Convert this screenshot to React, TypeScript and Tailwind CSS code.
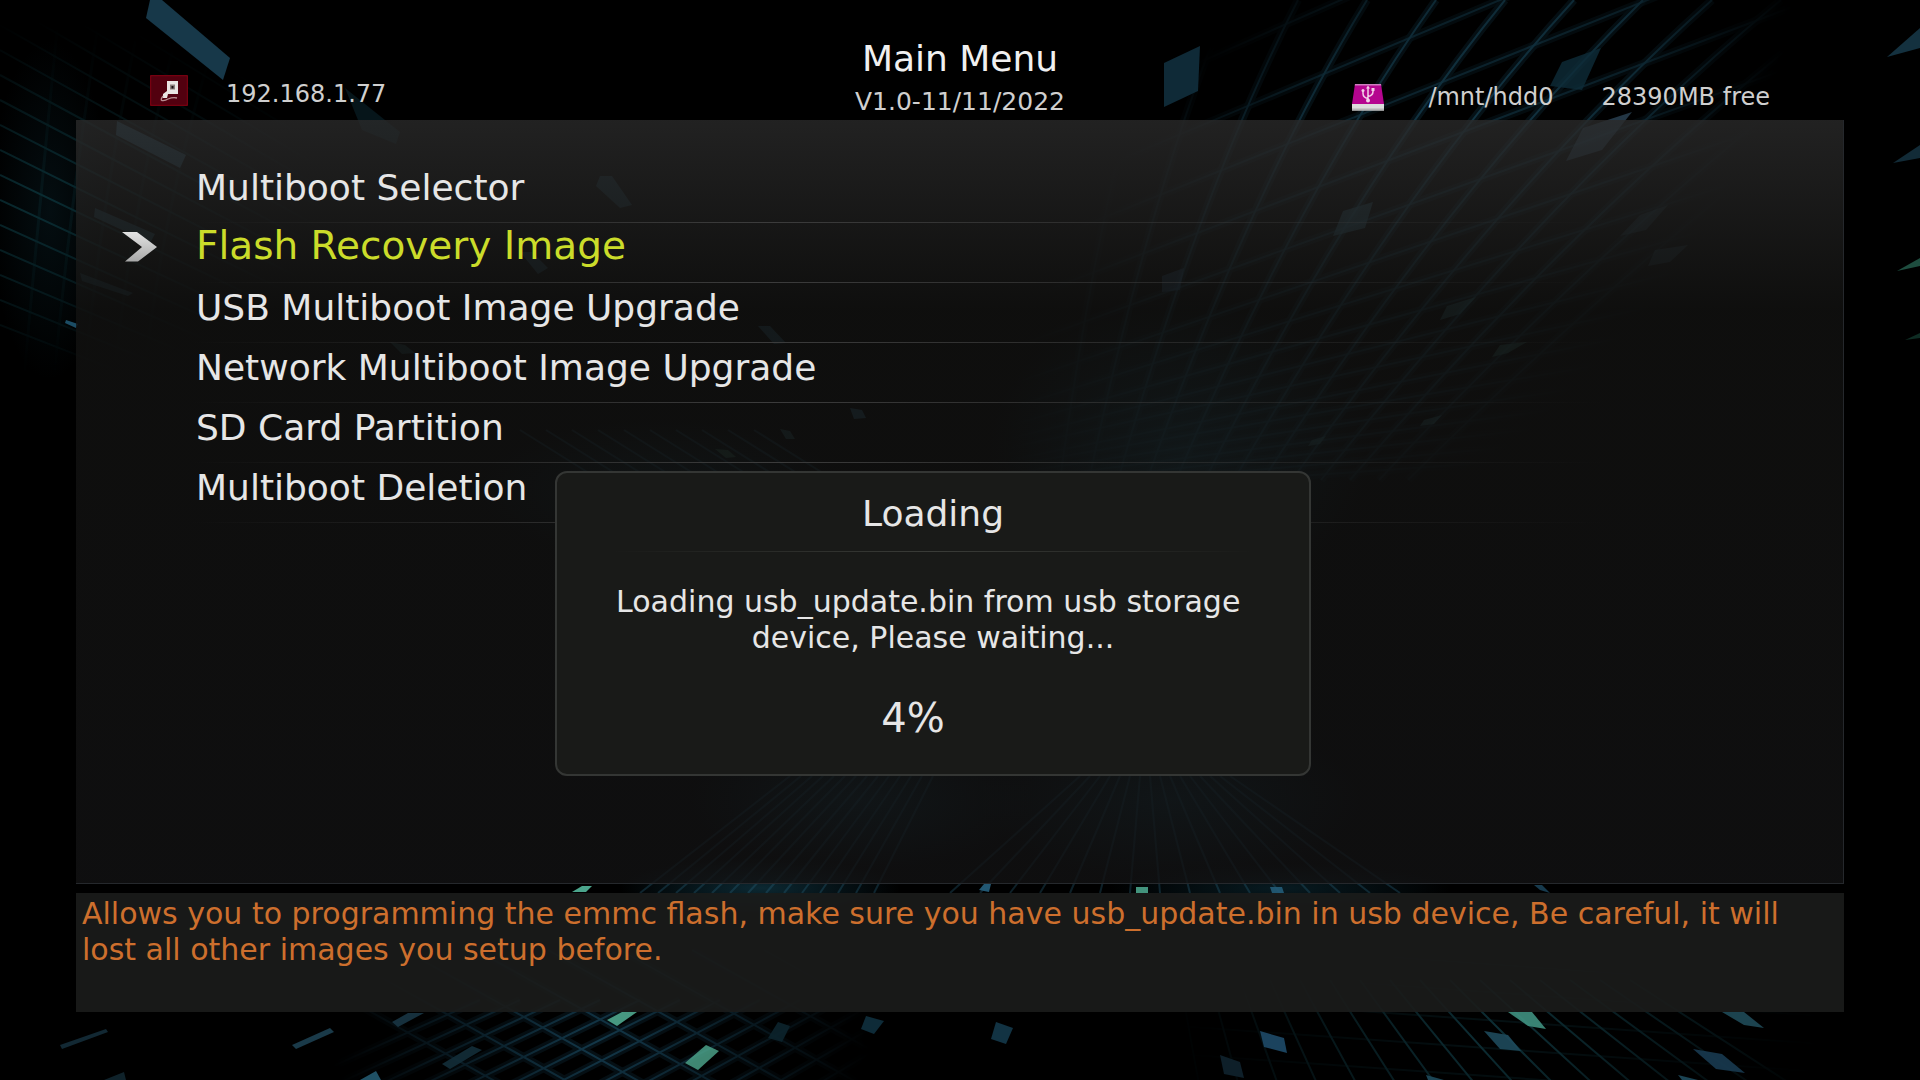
import React from "react";

const MENU = [
  "Multiboot Selector",
  "Flash Recovery Image",
  "USB Multiboot Image Upgrade",
  "Network Multiboot Image Upgrade",
  "SD Card Partition",
  "Multiboot Deletion",
];
const SELECTED = 1;

const range = (n: number) => Array.from({ length: n }, (_, i) => i);

/* Cross lines of the right wall: [height at x=1500, slope] */
const RIGHT_CROSS: [number, number][] = [
  [-70, -0.44], [0, -0.42], [59, -0.4], [118, -0.38], [172, -0.36], [218, -0.34], [256, -0.31],
  [288, -0.28], [316, -0.25], [340, -0.22], [362, -0.2], [382, -0.17], [400, -0.15], [417, -0.13],
  [433, -0.11], [448, -0.09], [462, -0.07],
];

/* Loose tiles: [points, colour, opacity] */
const TILES: [string, string, number][] = [
  ["150,0 162,0 230,58 223,80 146,18", "#1b4256", 0.85],
  ["117,121 186,155 180,168 116,135", "#2c5468", 0.75],
  ["95,208 155,234 150,243 94,217", "#234a5a", 0.7],
  ["80,273 133,293 128,296 82,281", "#234a5a", 0.5],
  ["66,320 78,324 76,328 65,323", "#1f5570", 0.9],
  ["345,88 400,132 396,144 362,130", "#07171d", 0.9],
  ["600,176 612,176 632,205 620,208 596,186", "#234a5c", 0.55],
  ["520,252 532,252 548,268 538,274", "#234a5c", 0.6],
  ["758,326 770,326 786,343 774,344", "#2b5a72", 0.6],
  ["850,408 862,410 866,418 854,419", "#2b5a72", 0.7],
  ["780,429 790,431 795,439 786,439", "#2b5a60", 0.6],
  ["715,449 728,450 736,457 726,458", "#30604e", 0.6],
  ["390,342 405,345 415,353 402,354", "#2b5a60", 0.5],
  ["1164,63 1200,46 1198,91 1164,107", "#123141", 0.85],
  ["1562,62 1601,48 1582,90 1550,86", "#0e2c38", 0.8],
  ["1583,128 1632,112 1602,150 1566,161", "#3a5a72", 0.6],
  ["1343,211 1373,202 1365,228 1333,236", "#2b5566", 0.7],
  ["1640,215 1668,205 1646,230 1620,236", "#2b4a5a", 0.4],
  ["1655,250 1688,245 1670,262 1648,266", "#2b4a5a", 0.4],
  ["1162,276 1184,268 1180,290 1162,292", "#2c5070", 0.5],
  ["1447,306 1476,297 1460,314 1440,320", "#2b5a60", 0.6],
  ["1500,345 1527,342 1508,353 1492,357", "#2b5a55", 0.6],
  ["1424,420 1442,415 1434,424 1420,426", "#2b5a60", 0.6],
  ["1312,440 1326,436 1320,444 1308,446", "#2b5a60", 0.6],
  ["1887,57 1920,28 1920,48", "#183a4a", 0.85],
  ["1893,163 1920,145 1920,158", "#183a4a", 0.75],
  ["1897,271 1920,258 1920,266", "#26604f", 0.8],
  ["1905,340 1920,333 1920,338", "#184a3a", 0.6],
  ["572,892 582,886 592,886 586,892", "#4fae93", 0.95],
  ["984,884 991,884 989,892 979,890", "#245c78", 0.95],
  ["1136,887 1148,887 1148,893 1136,893", "#4fae93", 0.85],
  ["1270,887 1282,887 1284,893 1272,893", "#245c78", 0.9],
  ["1534,885 1542,885 1550,893 1540,890", "#1d4860", 0.8],
  ["607,1020 622,1012 637,1012 617,1026", "#4fa98f", 0.9],
  ["706,1045 719,1051 698,1070 685,1063", "#4fa98f", 0.8],
  ["392,1022 408,1013 424,1013 398,1027", "#1c3c4c", 0.8],
  ["292,1045 330,1028 334,1032 296,1049", "#1f4456", 0.85],
  ["60,1045 106,1029 108,1032 62,1049", "#142c38", 0.9],
  ["442,1064 472,1046 482,1050 450,1069", "#132d38", 0.9],
  ["360,1080 376,1071 381,1080", "#245a70", 0.9],
  ["104,1080 124,1072 126,1080", "#11262f", 0.9],
  ["866,1016 884,1021 874,1034 861,1029", "#10303e", 0.9],
  ["778,1022 790,1026 782,1042 768,1038", "#0c242c", 0.9],
  ["996,1022 1013,1028 1006,1044 991,1039", "#14394a", 0.9],
  ["1260,1031 1284,1038 1287,1053 1264,1047", "#1e4a68", 0.9],
  ["1220,1055 1240,1062 1244,1078 1224,1074", "#10222e", 0.9],
  ["1484,1031 1508,1035 1521,1051 1500,1049", "#1e4a5c", 0.9],
  ["1508,1012 1532,1012 1546,1029 1528,1026", "#3f9080", 0.9],
  ["1693,1049 1722,1054 1745,1073 1716,1069", "#183a50", 0.9],
  ["1722,1012 1744,1012 1764,1028 1744,1025", "#1f4a58", 0.9],
  ["1426,1075 1444,1080 1428,1080", "#1e4a5c", 0.9],
  ["1678,1075 1698,1080 1682,1080", "#1e4a5c", 0.9],
];

function RightWall() {
  return (
    <>
      {range(13).map((i) => (
        <path key={i} d={`M${1160 + 69 * i} 0Q${1100 + 50 * i} 190 ${1060 + 29 * i} 480`} />
      ))}
      {RIGHT_CROSS.map(([y, s]) => (
        <path key={`c${y}`} d={`M1000 ${y - 500 * s}L1900 ${y + 400 * s}`} opacity="0.7" />
      ))}
    </>
  );
}

function LeftFloor() {
  return (
    <>
      {range(13).map((i) => (
        <path key={i} d={`M${280 + i * 44} 1090L${480 + i * 40} 1000`} />
      ))}
      {range(9).map((i) => (
        <path key={`c${i}`} d={`M${260 + i * 72} 950L${500 + i * 72} 1084`} />
      ))}
    </>
  );
}

function Backdrop() {
  return (
    <svg
      aria-hidden="true"
      className="absolute inset-0 h-full w-full"
      viewBox="0 0 1920 1080"
      preserveAspectRatio="none"
      fill="none"
    >
      <defs>
        <radialGradient id="fadeRight" gradientUnits="userSpaceOnUse" cx="0" cy="0" r="1" gradientTransform="translate(1400 210) rotate(-45) scale(500 250)">
          <stop offset="0" stopColor="#fff" />
          <stop offset="0.6" stopColor="#fff" stopOpacity="0.7" />
          <stop offset="1" stopColor="#fff" stopOpacity="0" />
        </radialGradient>
        <radialGradient id="fadeLeft" gradientUnits="userSpaceOnUse" cx="0" cy="0" r="1" gradientTransform="translate(30 200) scale(300 180)">
          <stop offset="0" stopColor="#fff" />
          <stop offset="1" stopColor="#fff" stopOpacity="0" />
        </radialGradient>
        <radialGradient id="fadeFloorL" gradientUnits="userSpaceOnUse" cx="0" cy="0" r="1" gradientTransform="translate(600 1040) scale(270 190)">
          <stop offset="0" stopColor="#fff" />
          <stop offset="1" stopColor="#fff" stopOpacity="0" />
        </radialGradient>
        <radialGradient id="fadeFloorR" gradientUnits="userSpaceOnUse" cx="0" cy="0" r="1" gradientTransform="translate(1500 1030) scale(330 200)">
          <stop offset="0" stopColor="#fff" />
          <stop offset="1" stopColor="#fff" stopOpacity="0" />
        </radialGradient>
        <radialGradient id="glow">
          <stop offset="0" stopColor="#1a5a70" stopOpacity="0.75" />
          <stop offset="1" stopColor="#1a5a70" stopOpacity="0" />
        </radialGradient>
        <mask id="maskRight"><rect width="1920" height="1080" fill="url(#fadeRight)" /></mask>
        <mask id="maskLeft"><rect width="1920" height="1080" fill="url(#fadeLeft)" /></mask>
        <mask id="maskFloorL"><rect width="1920" height="1080" fill="url(#fadeFloorL)" /></mask>
        <mask id="maskFloorR"><rect width="1920" height="1080" fill="url(#fadeFloorR)" /></mask>
      </defs>

      <ellipse cx="1180" cy="450" rx="190" ry="150" fill="url(#glow)" opacity="0.6" />
      <ellipse cx="660" cy="490" rx="180" ry="70" fill="url(#glow)" opacity="0.4" />
      <ellipse cx="860" cy="800" rx="170" ry="70" fill="url(#glow)" opacity="0.5" />
      <ellipse cx="1170" cy="800" rx="190" ry="80" fill="url(#glow)" opacity="0.5" />
      <ellipse cx="760" cy="888" rx="140" ry="30" fill="url(#glow)" opacity="0.6" />
      <ellipse cx="1280" cy="888" rx="170" ry="24" fill="url(#glow)" opacity="0.4" />
      <ellipse cx="50" cy="210" rx="60" ry="170" fill="url(#glow)" opacity="0.2" />

      <g mask="url(#maskRight)" stroke="#22617c">
        <g strokeWidth="8" opacity="0.2">
          <RightWall />
        </g>
        <g strokeWidth="2" opacity="0.5">
          <RightWall />
        </g>
      </g>

      <g mask="url(#maskLeft)" stroke="#12505a" strokeWidth="2" opacity="0.5">
        {range(20).map((i) => (
          <path key={i} d={`M0 ${-150 + i * 25}L400 ${120 + i * 19}`} />
        ))}
        {range(5).map((i) => (
          <path key={`v${i}`} d={`M${60 + i * 42} 0Q${40 + i * 30} 200 ${22 + i * 30} 400`} strokeWidth="3" opacity="0.35" />
        ))}
      </g>

      <g mask="url(#maskFloorL)" stroke="#1d526c">
        <g strokeWidth="8" opacity="0.22">
          <LeftFloor />
        </g>
        <g strokeWidth="2" opacity="0.6">
          <LeftFloor />
        </g>
      </g>

      <g mask="url(#maskFloorR)" stroke="#17505c" strokeWidth="2" opacity="0.6">
        {range(16).map((i) => (
          <path key={i} d={`M${1180 + i * 30} 980L${1200 + i * 40} 1090`} />
        ))}
        {range(7).map((i) => (
          <path key={`c${i}`} d={`M1150 ${940 + i * 28}L1850 ${990 + i * 28}`} opacity="0.35" />
        ))}
      </g>

      {/* distant floor and ceiling lines seen through the panel */}
      <g stroke="#2c6a86" strokeWidth="2" opacity="0.3">
        {range(16).map((i) => (
          <path key={i} d={`M${950 + i * 30} 893L${1080 + i * 10} 776`} />
        ))}
        {range(14).map((i) => (
          <path key={`l${i}`} d={`M${640 + i * 18} 893L${790 + i * 11} 776`} />
        ))}
        {range(10).map((i) => (
          <path key={`m${i}`} d={`M${520 + i * 26} 430L${600 + i * 26} 480`} />
        ))}
      </g>

      {TILES.map(([points, fill, opacity]) => (
        <polygon key={points} points={points} fill={fill} opacity={opacity} />
      ))}
    </svg>
  );
}

function NetworkIcon() {
  return (
    <svg aria-hidden="true" className="mb-0.5 shrink-0" width="38" height="31" viewBox="0 0 38 31">
      <rect x="0.5" y="0.5" width="37" height="30" rx="1.5" fill="#52000f" stroke="#760010" strokeWidth="1.5" />
      <path d="M17 6h11v13H18l-1 4h-4v-4l4-3z" fill="#e9e4e2" />
      <path d="M20 9.500h5v5h-5z" fill="#8b7f7c" />
      <path d="M21.500 11h2v2.500h-2z" fill="#1c1012" />
      <path d="M13 21q-3 4-1 4.500 3 .5 6-1.500 5-2 9-1" fill="none" stroke="#b98d92" strokeWidth="1.300" />
    </svg>
  );
}

function UsbDiskIcon() {
  return (
    <svg aria-hidden="true" className="shrink-0" width="32" height="27" viewBox="0 0 32 27">
      <path d="M3 0h26L32 20H0z" fill="#b5058f" />
      <path d="M3 0h26l.3 1.500H2.700z" fill="#cf7fbf" />
      <path d="M0 20h32v6.500H0z" fill="#dcdcdc" />
      <path d="M0 24.500h32v2H0z" fill="#b4b4b4" />
      <g stroke="#f3cfe9" strokeWidth="1.500" fill="none">
        <path d="M16 3v14M16 14.500q-5-1-5-5V7M16 12.500q5-1 5-5V5" />
      </g>
      <g fill="#f3cfe9">
        <path d="M16 1.500l2 3h-4z" />
        <circle cx="16" cy="16.500" r="2" />
        <circle cx="11" cy="6.500" r="1.500" />
        <path d="M19.500 4h3v3h-3z" />
      </g>
    </svg>
  );
}

function Cursor() {
  return (
    <svg aria-hidden="true" width="35" height="30" viewBox="0 0 35 30">
      <defs>
        <linearGradient id="cursorFill" x1="0" y1="0" x2="0" y2="1">
          <stop offset="0" stopColor="#e4e4e4" />
          <stop offset="1" stopColor="#a8a8a8" />
        </linearGradient>
      </defs>
      <path d="M0 0h15l20 15-19 14.500H3L20 15z" fill="url(#cursorFill)" />
    </svg>
  );
}

export default function App() {
  return (
    <div className="relative flex min-h-screen flex-col overflow-hidden bg-black px-[76px] pb-[68px] font-['DejaVu_Sans',sans-serif] text-[#e6e6e6]">
      <Backdrop />

      <header className="relative grid h-[120px] grid-cols-[1fr_auto_1fr] items-end text-[24px] leading-7 text-[#cfcfcf]">
        <div className="flex items-end gap-[38px] pb-3 pl-[74px]">
          <NetworkIcon />
          <span>192.168.1.77</span>
        </div>
        <div className="flex flex-col items-center gap-2 pb-1">
          <h1 className="text-[36px] leading-[42px] text-[#f0f0f0]">Main Menu</h1>
          <p className="text-[25px] leading-7">V1.0-11/11/2022</p>
        </div>
        <div className="flex items-end justify-end pr-[74px] pb-[9px]">
          <UsbDiskIcon />
          <span className="pl-11">/mnt/hdd0</span>
          <span className="pl-12">28390MB free</span>
        </div>
      </header>

      <main className="relative flex-1 border-r border-b border-[#25282c] bg-linear-to-b from-[#2a2a2a]/80 via-[#121211]/80 via-25% to-[#121213]/80 pt-[43px]">
        <ul>
          {MENU.map((label, i) => (
            <li key={label}>
              <button
                type="button"
                aria-current={i === SELECTED}
                className="flex h-[59px] w-full items-end pb-[13px] text-left"
              >
                <span className="flex w-[120px] justify-end pr-[39px] pb-[7px]">{i === SELECTED && <Cursor />}</span>
                <span
                  className={
                    i === SELECTED
                      ? "text-[39px] leading-[46px] text-[#cbdc2a]"
                      : "text-[36px] leading-[42px]"
                  }
                >
                  {label}
                </span>
              </button>
              <div className="mr-[240px] ml-[116px] h-px bg-linear-to-r from-transparent via-[#3c3c3c] via-40% to-transparent" />
            </li>
          ))}
        </ul>

        <section
          role="dialog"
          aria-labelledby="dialog-title"
          className="absolute top-[351px] left-[479px] flex w-[756px] flex-col items-center rounded-xl border-2 border-[#343634] bg-[#191a18] pt-5 pb-8"
        >
          <h2 id="dialog-title" className="text-[36px] leading-[42px]">Loading</h2>
          <div className="mt-4 h-px w-[640px] bg-linear-to-r from-transparent via-[#3a3c38] to-transparent" />
          <p className="mt-8 text-center text-[30px] leading-9 whitespace-pre">
            {"Loading usb_update.bin from usb storage \ndevice, Please waiting..."}
          </p>
          <p className="mt-[38px] pr-10 text-[40px] leading-[48px]">4%</p>
        </section>
      </main>

      <footer className="relative mt-[9px] h-[119px] bg-[#1b1c1b]/90 px-1.5 pt-[3px]">
        <p className="text-[30px] leading-9 text-[#cd6f2d]">
          Allows you to programming the emmc flash, make sure you have usb_update.bin in usb device, Be careful, it will
          lost all other images you setup before.
        </p>
      </footer>
    </div>
  );
}
